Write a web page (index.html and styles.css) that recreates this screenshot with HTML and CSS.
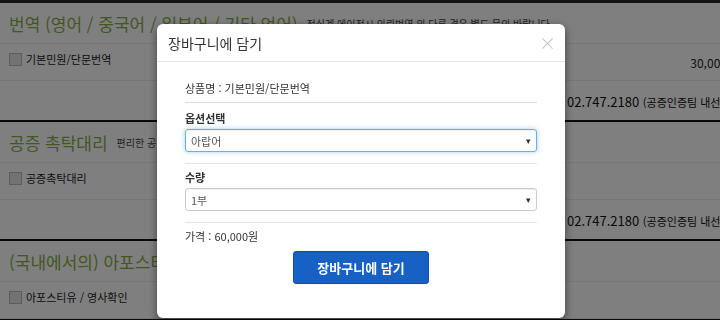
FILE: index.html
```html
<!DOCTYPE html>
<html lang="ko">
<head>
    <meta charset="UTF-8">
    <meta name="viewport" content="width=device-width, initial-scale=1.0">
    <title>장바구니에 담기</title>
    <link rel="stylesheet" href="styles.css">
</head>
<body>
    <div class="page">
        <!-- 번역 -->
        <div class="section">
            <div class="section-head">
                <h2>번역 (영어 / 중국어 / 일본어 / 기타 언어)</h2>
                <span class="desc">정식계 에이전시 의뢰번역 외 다른 경우 별도 문의 바랍니다</span>
            </div>
            <div class="item-row">
                <label class="item"><span class="check"></span>기본민원/단문번역</label>
                <div class="price">30,000원</div>
            </div>
            <div class="contact-row">
                <div></div>
                <div class="contact">02.747.2180 <small>(공증인증팀 내선 4번)</small></div>
            </div>
        </div>

        <!-- 공증 -->
        <div class="section">
            <div class="section-head">
                <h2>공증 촉탁대리</h2>
                <span class="desc">편리한 공증 촉탁대리 서비스</span>
            </div>
            <div class="item-row">
                <label class="item"><span class="check"></span>공증촉탁대리</label>
                <div class="price"></div>
            </div>
            <div class="contact-row">
                <div></div>
                <div class="contact">02.747.2180 <small>(공증인증팀 내선 4번)</small></div>
            </div>
        </div>

        <!-- 아포스티유 -->
        <div class="section">
            <div class="section-head">
                <h2>(국내에서의) 아포스티유 / 영사확인</h2>
            </div>
            <div class="item-row">
                <label class="item"><span class="check"></span>아포스티유 / 영사확인</label>
                <div class="price"></div>
            </div>
        </div>
    </div>

    <!-- 장바구니 모달 -->
    <div class="overlay">
        <div class="modal">
            <div class="modal-header">
                <h3>장바구니에 담기</h3>
                <span class="close">&times;</span>
            </div>
            <div class="modal-body">
                <div class="product">상품명 : 기본민원/단문번역</div>
                <div class="field">
                    <div class="field-label">옵션선택</div>
                    <div class="select focus"><span>아랍어</span><span class="arrow">&#9662;</span></div>
                </div>
                <div class="field">
                    <div class="field-label">수량</div>
                    <div class="select"><span>1부</span><span class="arrow">&#9662;</span></div>
                </div>
                <div class="total">가격 : 60,000원</div>
                <div class="actions">
                    <button class="btn-cart">장바구니에 담기</button>
                </div>
            </div>
        </div>
    </div>
</body>
</html>
```

FILE: styles.css
```css
body {
    font-family: "Noto Sans CJK KR", "Noto Sans", sans-serif;
    background-color: #fff;
    color: #333;
    margin: 0;
    padding: 0;
    overflow: hidden;
}
.page {
    width: 800px;
    border-top: 3px solid #222;
}
.section {
    border-bottom: 2px solid #111;
}
.section-head {
    display: flex;
    gap: 9px;
    padding: 0 9px;
    height: 40px;
    align-items: center;
    border-bottom: 1px solid #eee;
}
.section-head h2 {
    margin: 0;
    font-size: 17px;
    font-weight: normal;
    color: #86ad48;
    white-space: nowrap;
}
.desc {
    font-size: 10px;
    color: #444;
    white-space: nowrap;
}
.item-row, .contact-row {
    display: grid;
    grid-template-columns: 557px 1fr;
    border-bottom: 1px solid #eee;
}
.item-row {
    height: 36px;
}
.contact-row {
    height: 39px;
    border-bottom: none;
}
.item {
    display: flex;
    align-items: center;
    gap: 4px;
    padding: 7px 9px 0;
    height: 16px;
    font-size: 11px;
    color: #222;
}
.check {
    width: 11px;
    height: 11px;
    border: 1px solid #bbb;
    background-color: #e4e4e4;
}
.price {
    text-align: right;
    padding: 10px 62px 0 0;
    font-size: 12px;
    color: #222;
}
.contact {
    padding-top: 11px;
    padding-left: 10px;
    font-size: 13px;
    color: #111;
    white-space: nowrap;
}
.contact small {
    font-size: 11px;
}
.overlay {
    position: fixed;
    inset: 0;
    background-color: rgba(0, 0, 0, 0.5);
}
.modal {
    position: absolute;
    left: 157px;
    top: 24px;
    width: 408px;
    height: 294px;
    background-color: #fff;
    border-radius: 6px;
    box-shadow: 0 3px 9px rgba(0, 0, 0, 0.5);
}
.modal-header {
    display: flex;
    justify-content: space-between;
    align-items: center;
    height: 37px;
    padding: 0 11px;
    border-bottom: 1px solid #e5e5e5;
}
.modal-header h3 {
    margin: 0;
    font-size: 14px;
    font-weight: normal;
    color: #333;
}
.close {
    font-size: 17px;
    color: #cbcbcb;
    margin-right: -2px;
}
.modal-body {
    padding: 0 28px;
}
.product {
    padding: 18px 0 6px;
    line-height: 16px;
    font-size: 11px;
    color: #333;
    border-bottom: 1px solid #ddd;
}
.field {
    padding: 7px 0 11px;
    border-bottom: 1px solid #e5e5e5;
}
.field + .field {
    padding-top: 5px;
}
.field-label {
    line-height: 16px;
    font-size: 11px;
    font-weight: bold;
    color: #333;
    margin-bottom: 3px;
}
.select {
    display: flex;
    justify-content: space-between;
    align-items: center;
    height: 21px;
    padding: 0 5px;
    border: 1px solid #ccc;
    border-radius: 3px;
    font-size: 11px;
    color: #555;
    box-shadow: inset 0 1px 1px rgba(0, 0, 0, 0.06);
}
.select.focus {
    border-color: #66afe9;
    box-shadow: inset 0 1px 1px rgba(0, 0, 0, 0.07), 0 0 5px rgba(102, 175, 233, 0.6);
}
.arrow {
    font-size: 9px;
    color: #333;
}
.total {
    padding-top: 5px;
    line-height: 16px;
    font-size: 11px;
    color: #333;
}
.actions {
    display: flex;
    justify-content: center;
    padding-top: 7px;
}
.btn-cart {
    width: 136px;
    height: 33px;
    border: 1px solid #0e4fa8;
    border-radius: 3px;
    background-color: #1760c4;
    color: #fff;
    font-family: inherit;
    font-size: 13px;
    font-weight: bold;
}
```
